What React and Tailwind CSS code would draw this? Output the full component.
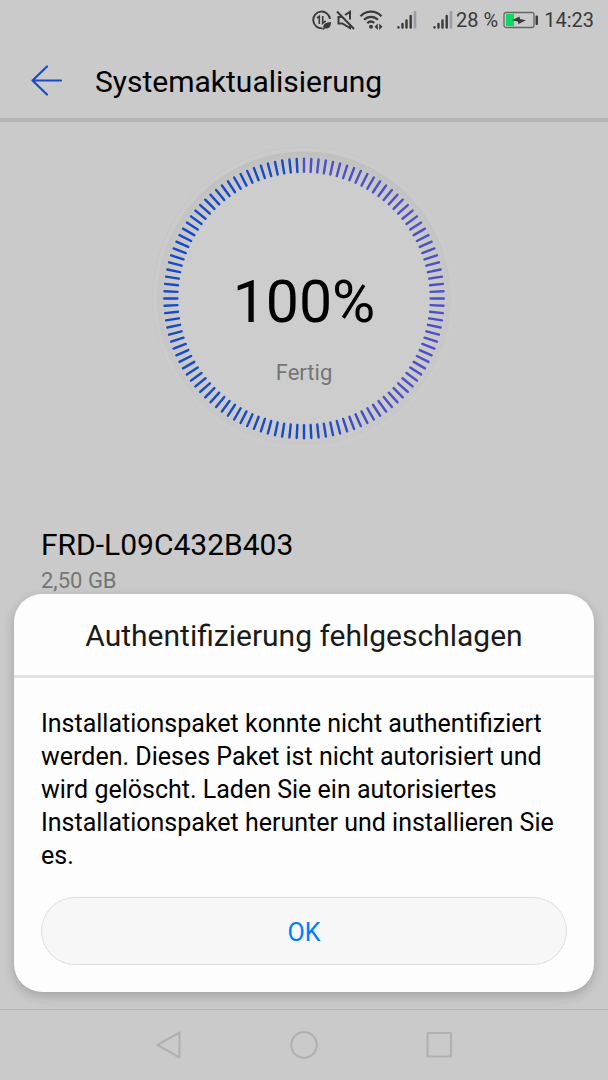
import React from "react"

const TICKS = 120

// purple on the right half, fading to blue at the bottom
function tickColor(angle) {
  const t = Math.min(1, Math.max(0, (angle - 145) / 33))
  const mix = (a, b) => Math.round(a + (b - a) * t)
  return `rgb(${mix(76, 22)}, ${mix(80, 74)}, ${mix(200, 200)})`
}

function ProgressRing() {
  const ticks = []
  for (let i = 0; i < TICKS; i++) {
    const angle = (i * 360) / TICKS
    ticks.push(
      <line
        key={i}
        x1="153"
        y1="13.3"
        x2="153"
        y2="26.3"
        stroke={tickColor(angle)}
        strokeWidth="2.4"
        strokeLinecap="round"
        transform={`rotate(${angle} 153 153)`}
      />
    )
  }
  return (
    <svg viewBox="0 0.5 306 306" className="col-start-1 row-start-1 w-[306px] h-[306px]" aria-hidden="true">
      <defs>
        <linearGradient id="rim" x1="0" y1="0" x2="0" y2="1">
          <stop offset="0" stopColor="#bfbfbf" />
          <stop offset="0.35" stopColor="#c5c5c5" />
          <stop offset="1" stopColor="#c8c8c8" />
        </linearGradient>
        <linearGradient id="halo" x1="0" y1="0" x2="1" y2="1">
          <stop offset="0" stopColor="#c2c2c2" />
          <stop offset="0.6" stopColor="#cacaca" />
        </linearGradient>
        <radialGradient id="face">
          <stop offset="0.84" stopColor="#cdcdcd" />
          <stop offset="1" stopColor="#cdcdcd" stopOpacity="0" />
        </radialGradient>
      </defs>
      <circle cx="153" cy="153" r="151.5" fill="#cbcbcb" stroke="url(#halo)" />
      <circle cx="153" cy="153" r="147" fill="url(#rim)" />
      <circle cx="153" cy="153" r="147" fill="url(#face)" />
      {ticks}
    </svg>
  )
}

function Signal() {
  return (
    <svg viewBox="0 0 20 20" className="w-5 h-5" strokeWidth="2.4" strokeLinecap="round" aria-hidden="true">
      <path d="M1.5 17.3v.2M5.5 14v3.5M9.5 10.5v7M13.7 6v11.500" stroke="#3a3a3a" />
      <path d="M18 1v17.5" stroke="#9c9ca8" strokeWidth="2.6" strokeLinecap="butt" />
    </svg>
  )
}

function StatusBar() {
  return (
    <div className="h-10 pr-[14px] flex flex-row items-center justify-end text-xl text-[#3a3a3a]">
      <svg viewBox="0 0 20 20" className="w-5 h-5" fill="none" stroke="#3a3a3a" strokeWidth="1.9" aria-hidden="true">
        <path d="M18 9A8.4 8.4 0 1 0 10.5 18.3" />
        <path d="m5 8 2.300-1.700V14M10.700 6v7.300l3-2.500" strokeWidth="1.6" />
        <path d="M11.2 17.5c0-3.500 2.500-5.300 7.800-5.500 0 4.500-2 7-5.500 6.500z" fill="#3a3a3a" stroke="none" />
        <path d="m10.8 19.5 3-3" strokeWidth="1.4" />
      </svg>
      <svg viewBox="0 0 20 20" className="w-5 h-5 ml-1" fill="none" stroke="#3a3a3a" strokeWidth="2" aria-hidden="true">
        <path d="M1 1.5 18 19" />
        <path d="M6.5 7H2.5v6.500h3.800l7.700 4.500v-4M9 5l5-3.200V9.500" />
      </svg>
      <svg viewBox="0 0 24 20" className="w-6 h-5 ml-[3px]" fill="none" stroke="#3a3a3a" strokeWidth="2.3" aria-hidden="true">
        <path d="M1.5 6.2C7.5.2 16.5.2 22.5 6.2M5 9.8c4-4 10-4 14 0M8.3 13.2c2-2 4.7-2.1 7-.4" />
        <circle cx="12" cy="16.8" r="2" fill="#3a3a3a" stroke="none" />
        <path d="m18.8 13.5-3.300 3.200 3.300 3.200zM20.200 13.500l3.300 3.200-3.300 3.200z" fill="#3a3a3a" stroke="none" />
      </svg>
      <div className="ml-[14px]">
        <Signal />
      </div>
      <div className="ml-4">
        <Signal />
      </div>
      <span className="ml-[3px]">28 %</span>
      <svg viewBox="0 0 36 18" className="w-9 h-[18px] ml-[5px]" aria-hidden="true">
        <rect x="1" y="1.5" width="30" height="15" rx="2" fill="none" stroke="#666" strokeWidth="1.3" />
        <rect x="3" y="3" width="8" height="12" fill="#0dd85f" />
        <path d="M9 9.2 16.5 5.500 17 8l6 1.300-7.500 3.700-.8-2.500z" fill="#3a3a3a" />
        <rect x="32.5" y="4.5" width="2.5" height="9.5" rx="1" fill="#3a3a3a" />
      </svg>
      <span className="ml-[5px]">14:23</span>
    </div>
  )
}

function Header() {
  return (
    <header className="h-[82px] flex flex-row items-center border-b-4 border-[#b5b5b5] pt-[3px] pl-[31px]">
      <button type="button" aria-label="Zurück" className="w-8 h-8">
        <svg viewBox="0 0 32 32" className="w-8 h-8" fill="none" stroke="#174cc9" strokeWidth="2.2" strokeLinecap="round" strokeLinejoin="round">
          <path d="M30 15.500H1.500M16 1.500 1.500 15.500 16 29.500" />
        </svg>
      </button>
      <h1 className="ml-8 pt-[3px] text-[30px] leading-9">Systemaktualisierung</h1>
    </header>
  )
}

function Dialog() {
  return (
    <div
      role="dialog"
      aria-labelledby="dialog-title"
      className="absolute inset-x-[14px] bottom-[17px] rounded-[28px] bg-[#fdfdfd] shadow-[0_4px_12px_rgba(0,0,0,0.2)]"
    >
      <h2 id="dialog-title" className="h-[84px] flex items-center justify-center border-b-3 border-[#e3e3e3] pt-[3px] text-[30px] leading-9 text-[#1a1a1a]">
        Authentifizierung fehlgeschlagen
      </h2>
      <div className="px-[27px] pt-[29px] pb-[27px]">
        <p className="text-[25px] leading-[33px]">
          Installationspaket konnte nicht authentifiziert werden. Dieses Paket ist nicht autorisiert und wird
          gelöscht. Laden Sie ein autorisiertes Installationspaket herunter und installieren Sie es.
        </p>
        <button
          type="button"
          className="mt-[25px] w-full h-[68px] pt-[3px] rounded-full border border-[#dedede] bg-[#f7f7f7] text-[25px] text-[#007dff]"
        >
          OK
        </button>
      </div>
    </div>
  )
}

function NavBar() {
  return (
    <nav className="h-[71px] border-t border-[#b3b3b3] flex flex-row items-center justify-center gap-[107px]">
      <button type="button" aria-label="Zurück">
        <svg viewBox="0 0 28 28" className="w-7 h-7" fill="none" stroke="#b1b1b1" strokeWidth="2.2" strokeLinejoin="round">
          <path d="M24.5 1.500v25L2.500 14z" />
        </svg>
      </button>
      <button type="button" aria-label="Startseite">
        <svg viewBox="0 0 28 28" className="w-7 h-7" fill="none" stroke="#b1b1b1" strokeWidth="2.2">
          <circle cx="14" cy="14" r="12.8" />
        </svg>
      </button>
      <button type="button" aria-label="Übersicht">
        <svg viewBox="0 0 28 28" className="w-7 h-7" fill="none" stroke="#b1b1b1" strokeWidth="2.2" strokeLinejoin="round">
          <rect x="2.5" y="2" width="23.5" height="23.5" />
        </svg>
      </button>
    </nav>
  )
}

function App() {
  return (
    <div className="min-h-screen flex flex-col bg-[#cacaca] text-black font-['Roboto',sans-serif]">
      <StatusBar />
      <Header />
      <main className="relative flex-1 pt-6">
        <div className="grid justify-center">
          <ProgressRing />
          <div className="col-start-1 row-start-1 pt-[121px] text-center">
            <div className="text-[59px] leading-[70px]">100%</div>
            <div className="mt-[22px] text-[22px] leading-7 text-[#757575]">Fertig</div>
          </div>
        </div>
        <div className="mt-[75px] px-[41px]">
          <div className="text-[30px] leading-9">FRD-L09C432B403</div>
          <div className="mt-1 text-[22px] leading-7 text-[#757575]">2,50 GB</div>
        </div>
        <Dialog />
      </main>
      <NavBar />
    </div>
  )
}

export default App
